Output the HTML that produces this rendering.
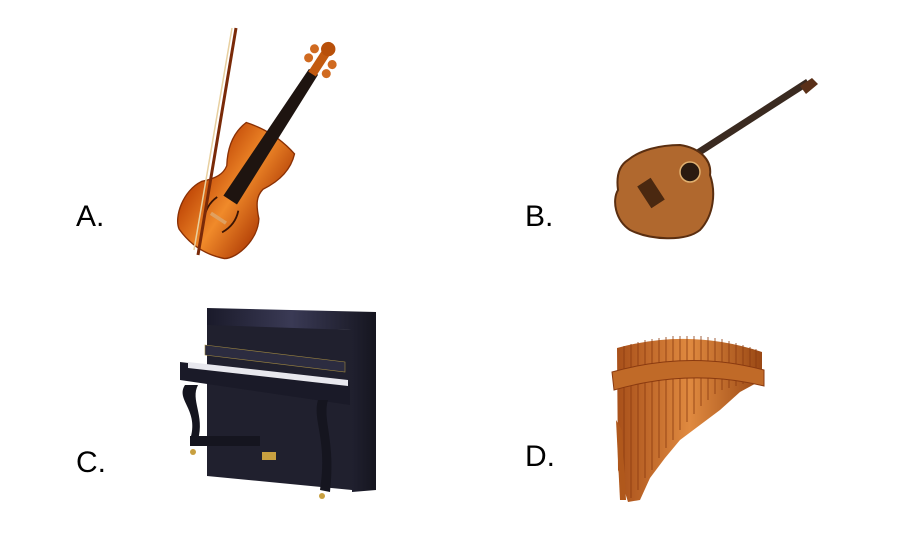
<!DOCTYPE html>
<html><head><meta charset="utf-8"><style>
html,body{margin:0;padding:0;background:#fff;width:900px;height:540px;overflow:hidden}
.l{position:absolute;font-family:"Liberation Sans",sans-serif;font-size:30px;color:#000}
svg{position:absolute;left:0;top:0}
</style></head><body>
<div class="l" style="left:76px;top:200px">A.</div>
<div class="l" style="left:525px;top:200px">B.</div>
<div class="l" style="left:76px;top:446px">C.</div>
<div class="l" style="left:525px;top:440px">D.</div>
<svg width="900" height="540" viewBox="0 0 900 540">
<defs>
<linearGradient id="vb" x1="0" x2="1"><stop offset="0" stop-color="#c24a08"/><stop offset=".5" stop-color="#f08a2a"/><stop offset="1" stop-color="#b8460a"/></linearGradient>
<linearGradient id="pk" x1="0" x2="1"><stop offset="0" stop-color="#1a1a2a"/><stop offset=".5" stop-color="#3a3a55"/><stop offset="1" stop-color="#15151f"/></linearGradient>
<linearGradient id="pipe" x1="0" x2="1"><stop offset="0" stop-color="#a8501a"/><stop offset=".5" stop-color="#e08a40"/><stop offset="1" stop-color="#9a4814"/></linearGradient>
</defs>
<g transform="translate(240,185) rotate(33) scale(0.9)">
<path d="M-32,-62 C-10,-68 10,-68 32,-62 C40,-40 30,-20 24,-10 C22,0 26,8 38,20 C50,40 42,70 30,78 C10,86 -10,86 -30,78 C-42,70 -50,40 -38,20 C-26,8 -22,0 -24,-10 C-30,-20 -40,-40 -32,-62Z" fill="url(#vb)" stroke="#8a3004" stroke-width="1.5"/>
<path d="M-6,-150 L6,-150 L9,20 L-9,20Z" fill="#1e1410"/>
<rect x="-5" y="-175" width="10" height="28" fill="#c25a10"/>
<circle cx="0" cy="-180" r="8" fill="#b8500a"/>
<circle cx="-13" cy="-160" r="5" fill="#d06a20"/><circle cx="13" cy="-168" r="5" fill="#d06a20"/>
<circle cx="-13" cy="-172" r="5" fill="#d06a20"/><circle cx="13" cy="-156" r="5" fill="#d06a20"/>
<path d="M-14,25 q-6,15 2,30 M14,25 q6,15 -2,30" stroke="#3a1404" stroke-width="2" fill="none"/>
<rect x="-10" y="42" width="20" height="4" fill="#e0a060"/>
</g>
<path d="M236,28 L198,255" stroke="#7a2a08" stroke-width="3"/>
<path d="M232,28 L194,250" stroke="#e8d0a0" stroke-width="1.5"/>
<g>
<path d="M690,158 L808,82" stroke="#3a2a20" stroke-width="7"/>
<path d="M800,86 L812,78 L818,84 L806,94Z" fill="#5a3018"/>
<path d="M628,160 C640,150 660,145 680,145 C700,148 712,160 710,175 C716,192 714,215 700,230 C685,242 650,240 630,230 C615,220 612,200 618,190 C616,175 620,165 628,160Z" fill="#b0682e" stroke="#5a2e10" stroke-width="2"/>
<circle cx="690" cy="172" r="10" fill="#2a1a10" stroke="#e0b070" stroke-width="1.5"/>
<rect x="643" y="180" width="16" height="26" fill="#4a2810" transform="rotate(-33 651 193)"/>
</g>
<g>
<path d="M207,308 L376,312 L376,490 L352,492 L352,330 L207,328Z" fill="url(#pk)"/>
<path d="M207,325 L352,330 L352,490 L207,476Z" fill="#20202e"/>
<path d="M180,362 L350,382 L350,405 L180,380Z" fill="#1a1a28"/>
<path d="M188,362 L348,380 L348,386 L188,368Z" fill="#e8e8ee"/>
<path d="M205,345 L345,362 L345,372 L205,355Z" fill="#2c2c40" stroke="#a08840" stroke-width=".6"/>
<path d="M185,385 C175,400 200,410 190,440 L198,440 C205,415 190,400 198,385Z" fill="#15151f"/>
<path d="M318,400 C312,420 328,440 320,490 L330,492 C336,440 322,420 328,400Z" fill="#15151f"/>
<rect x="190" y="436" width="70" height="10" fill="#15151f"/>
<rect x="262" y="452" width="14" height="8" fill="#c8a040"/>
<circle cx="193" cy="452" r="3" fill="#c8a040"/><circle cx="322" cy="496" r="3" fill="#c8a040"/>
</g>
<g>
<path d="M617,348 Q690,328 762,352 L762,380 L740,392 L720,410 L700,425 L680,440 L665,458 L650,478 L640,500 L628,502 L618,470Z" fill="url(#pipe)"/>
<g stroke="#8a3a10" stroke-width="1" opacity=".8">
<path d="M624,346V500M631,344V498M638,342V490M645,340V478M652,339V470M659,338V458M666,337V448M673,336V440M680,336V430M687,336V422M694,336V414M701,336V406M708,337V400M715,338V394M722,339V390M729,341V388M736,343V386M743,345V384M750,347V382M756,349V382"/>
</g>
<path d="M612,372 Q690,350 764,370 L764,386 Q690,368 614,390Z" fill="#c06a28" stroke="#8a3a10"/>
<path d="M616,420 L622,430 L626,500 L620,500Z" fill="#b0581c"/>
</g>
</svg>
</body></html>
